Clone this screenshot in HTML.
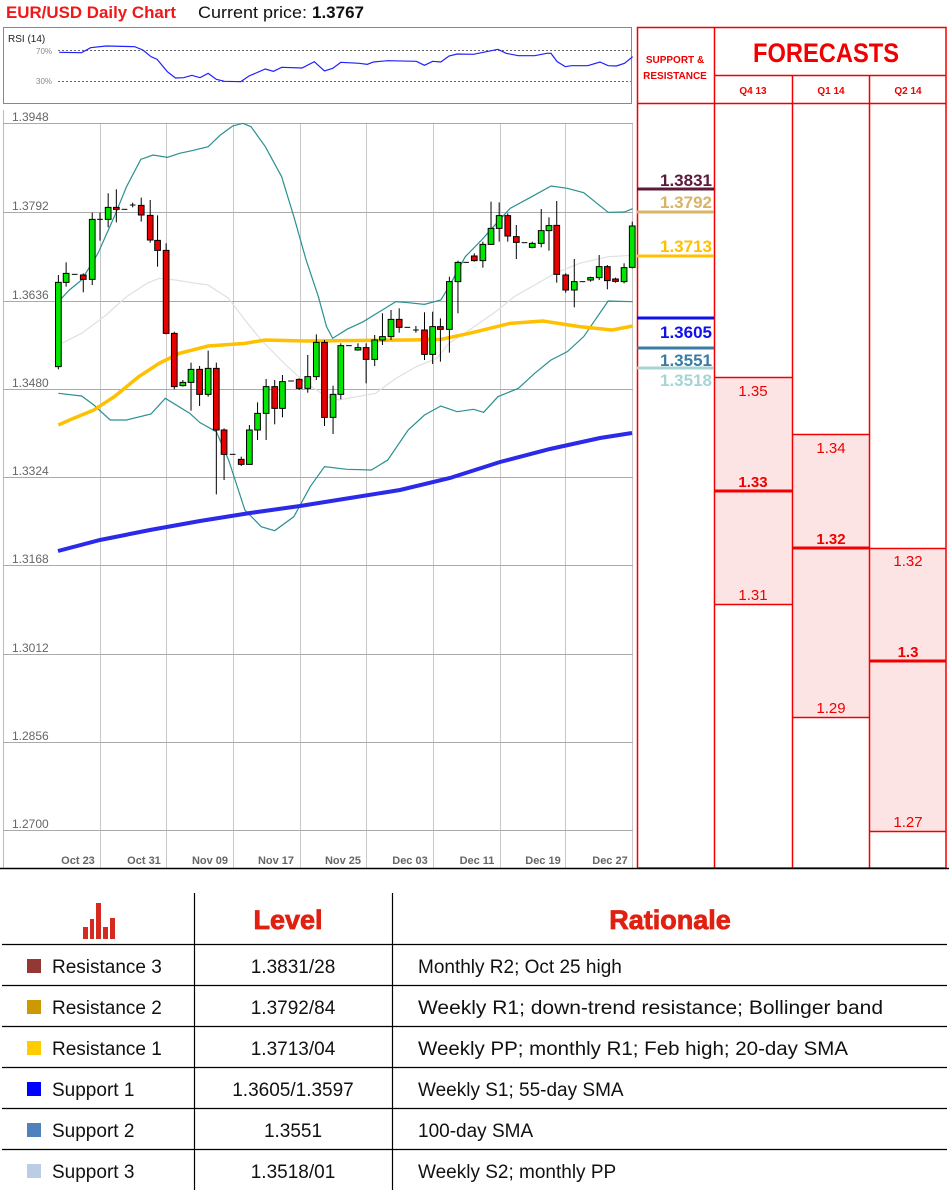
<!DOCTYPE html>
<html><head><meta charset="utf-8">
<style>
html,body{margin:0;padding:0;background:#fff;}
body{width:949px;height:1193px;overflow:hidden;position:relative;font-family:"Liberation Sans",sans-serif;}
svg{position:absolute;left:0;top:0;}
.c line{stroke:#000;stroke-width:1;vector-effect:non-scaling-stroke}
.c rect{stroke:#000;stroke-width:1;vector-effect:non-scaling-stroke}
.g{fill:#00e600}.r{fill:#e80000}
.ns{vector-effect:non-scaling-stroke;fill:none}
</style></head><body>
<svg width="949" height="1193" viewBox="0 0 949 1193" xmlns="http://www.w3.org/2000/svg">
<!-- title -->
<text x="6" y="18" font-size="17" font-weight="bold" fill="#f01818" textLength="170" lengthAdjust="spacingAndGlyphs">EUR/USD Daily Chart</text>
<text x="198" y="18" font-size="17" fill="#111" textLength="109" lengthAdjust="spacingAndGlyphs">Current price:</text>
<text x="312" y="18" font-size="17" font-weight="bold" fill="#111" textLength="52" lengthAdjust="spacingAndGlyphs">1.3767</text>
<!-- RSI -->
<rect x="3.5" y="27.5" width="628" height="76" fill="#fff" stroke="#888"/>
<text x="8" y="42" font-size="10" fill="#222">RSI (14)</text>
<text x="36" y="54" font-size="8" fill="#888">70%</text>
<text x="36" y="84" font-size="8" fill="#888">30%</text>
<line x1="58" y1="50.5" x2="631" y2="50.5" stroke="#666" stroke-dasharray="2,2"/>
<line x1="58" y1="81.5" x2="631" y2="81.5" stroke="#666" stroke-dasharray="2,2"/>
<g transform="scale(0.40816,0.33333)">
<polyline class="ns" stroke="#2020ff" stroke-width="1.2" points="145,157 200,158 222,143 260,138 330,140 350,150 370,170 385,178 410,215 430,234 450,233 470,226 490,233 510,220 530,238 550,244 590,245 610,228 650,207 670,214 690,202 740,204 770,185 795,213 815,205 835,187 880,190 900,193 915,186 950,182 1020,184 1040,196 1060,184 1080,186 1100,168 1120,162 1160,163 1220,148 1240,160 1270,167 1310,167 1340,160 1350,160 1365,185 1385,200 1400,197 1440,197 1470,186 1490,197 1510,198 1530,190 1550,170"/>
</g>
<!-- main chart frame -->
<line x1="3.5" y1="110" x2="3.5" y2="868" stroke="#bbb"/>
<g stroke="#c8c8c8" stroke-width="1">
<line x1="100.5" y1="123" x2="100.5" y2="868"/><line x1="166.5" y1="123" x2="166.5" y2="868"/><line x1="233.5" y1="123" x2="233.5" y2="868"/><line x1="300.5" y1="123" x2="300.5" y2="868"/><line x1="366.5" y1="123" x2="366.5" y2="868"/><line x1="433.5" y1="123" x2="433.5" y2="868"/><line x1="500.5" y1="123" x2="500.5" y2="868"/><line x1="565.5" y1="123" x2="565.5" y2="868"/><line x1="632.5" y1="123" x2="632.5" y2="868"/>
</g>
<g stroke="#aaa" stroke-width="1">
<line x1="3" y1="123.5" x2="633" y2="123.5"/><line x1="3" y1="212.5" x2="633" y2="212.5"/><line x1="3" y1="301.5" x2="633" y2="301.5"/><line x1="3" y1="389.5" x2="633" y2="389.5"/><line x1="3" y1="477.5" x2="633" y2="477.5"/><line x1="3" y1="565.5" x2="633" y2="565.5"/><line x1="3" y1="654.5" x2="633" y2="654.5"/><line x1="3" y1="742.5" x2="633" y2="742.5"/><line x1="3" y1="830.5" x2="633" y2="830.5"/>
</g>
<g font-size="12" fill="#666">
<text x="12" y="121">1.3948</text><text x="12" y="210">1.3792</text><text x="12" y="299">1.3636</text><text x="12" y="387">1.3480</text><text x="12" y="475">1.3324</text><text x="12" y="563">1.3168</text><text x="12" y="652">1.3012</text><text x="12" y="740">1.2856</text><text x="12" y="828">1.2700</text>
</g>
<g font-size="11" fill="#666" font-weight="bold" text-anchor="middle">
<text x="78" y="864">Oct 23</text><text x="144" y="864">Oct 31</text><text x="210" y="864">Nov 09</text><text x="276" y="864">Nov 17</text><text x="343" y="864">Nov 25</text><text x="410" y="864">Dec 03</text><text x="477" y="864">Dec 11</text><text x="543" y="864">Dec 19</text><text x="610" y="864">Dec 27</text>
</g>
<g transform="translate(0,110) scale(0.40816,0.33333)">
<polyline class="ns" stroke="#e0e0e0" stroke-width="1.2" points="143,705 200,670 260,615 310,560 360,520 390,505 430,510 470,518 510,525 560,565 600,630 640,690 700,765 750,820 800,860 830,870 920,850 970,805 1020,770 1070,745 1100,700 1150,660 1220,600 1260,560 1310,525 1360,490 1420,460 1490,440 1550,436"/>
<polyline class="ns" stroke="#2a9090" stroke-width="1.2" points="143,575 170,540 200,510 240,430 280,320 310,230 345,148 375,135 410,142 440,130 470,122 510,110 540,75 570,48 595,40 615,50 650,110 690,200 720,320 750,450 780,560 800,650 815,685 850,658 890,635 930,605 970,575 1000,578 1040,583 1080,570 1100,530 1140,440 1180,390 1220,335 1250,295 1300,262 1350,228 1390,235 1430,248 1490,307 1530,306 1550,296"/>
<polyline class="ns" stroke="#2a9090" stroke-width="1.2" points="143,850 200,858 230,885 270,930 310,930 370,912 405,865 465,910 490,938 530,965 560,1050 600,1200 640,1250 673,1262 720,1220 760,1130 795,1070 850,1078 910,1080 950,1050 1000,960 1040,915 1080,888 1120,905 1160,898 1185,907 1220,860 1270,835 1310,790 1350,750 1390,725 1430,680 1490,573 1550,575"/>
<polyline class="ns" stroke="#ffc000" stroke-width="3.5" points="143,945 180,925 230,900 280,860 340,800 390,760 440,730 510,708 600,700 650,690 750,693 1000,690 1080,688 1150,670 1250,640 1330,633 1420,650 1500,660 1550,648"/>
<g class="c">
<line x1="143" y1="495" x2="143" y2="778"/><rect class="g" x="136" y="517" width="14" height="253"/>
<line x1="162" y1="457" x2="162" y2="530"/><rect class="g" x="155" y="490" width="14" height="27"/>
<line x1="176" y1="493" x2="190" y2="493"/>
<line x1="204" y1="490" x2="204" y2="547"/><rect class="r" x="197" y="495" width="14" height="13"/>
<line x1="226" y1="308" x2="226" y2="525"/><rect class="g" x="219" y="328" width="14" height="180"/>
<line x1="245" y1="308" x2="245" y2="392"/><line x1="238" y1="328" x2="252" y2="328"/>
<line x1="265" y1="250" x2="265" y2="352"/><rect class="g" x="258" y="292" width="14" height="36"/>
<line x1="285" y1="238" x2="285" y2="337"/><rect class="r" x="278" y="292" width="14" height="6"/>
<line x1="298" y1="298" x2="312" y2="298"/>
<line x1="318" y1="285" x2="332" y2="285"/><line x1="325" y1="278" x2="325" y2="292"/>
<line x1="346" y1="263" x2="346" y2="335"/><rect class="r" x="339" y="286" width="14" height="29"/>
<line x1="368" y1="270" x2="368" y2="398"/><rect class="r" x="361" y="316" width="14" height="74"/>
<line x1="386" y1="316" x2="386" y2="470"/><rect class="r" x="379" y="391" width="14" height="30"/>
<line x1="407" y1="400" x2="407" y2="673"/><rect class="r" x="400" y="421" width="14" height="249"/>
<line x1="427" y1="665" x2="427" y2="838"/><rect class="r" x="420" y="670" width="14" height="160"/>
<line x1="448" y1="810" x2="448" y2="830"/><rect class="g" x="441" y="817" width="14" height="10"/>
<line x1="468" y1="758" x2="468" y2="902"/><rect class="g" x="461" y="778" width="14" height="39"/>
<line x1="489" y1="768" x2="489" y2="888"/><rect class="r" x="482" y="778" width="14" height="75"/>
<line x1="510" y1="722" x2="510" y2="860"/><rect class="g" x="503" y="775" width="14" height="78"/>
<line x1="530" y1="758" x2="530" y2="1153"/><rect class="r" x="523" y="775" width="14" height="185"/>
<line x1="549" y1="955" x2="549" y2="1110"/><rect class="r" x="542" y="960" width="14" height="73"/>
<line x1="563" y1="1033" x2="577" y2="1033"/>
<line x1="591" y1="1040" x2="591" y2="1068"/><rect class="r" x="584" y="1048" width="14" height="15"/>
<line x1="611" y1="945" x2="611" y2="1063"/><rect class="g" x="604" y="960" width="14" height="103"/>
<line x1="631" y1="877" x2="631" y2="990"/><rect class="g" x="624" y="910" width="14" height="50"/>
<line x1="652" y1="807" x2="652" y2="990"/><rect class="g" x="645" y="830" width="14" height="80"/>
<line x1="673" y1="810" x2="673" y2="943"/><rect class="r" x="666" y="830" width="14" height="65"/>
<line x1="692" y1="795" x2="692" y2="922"/><rect class="g" x="685" y="815" width="14" height="80"/>
<line x1="706" y1="813" x2="720" y2="813"/>
<line x1="733" y1="805" x2="733" y2="840"/><rect class="r" x="726" y="808" width="14" height="27"/>
<line x1="754" y1="735" x2="754" y2="848"/><rect class="g" x="747" y="800" width="14" height="35"/>
<line x1="775" y1="673" x2="775" y2="810"/><rect class="g" x="768" y="697" width="14" height="103"/>
<line x1="795" y1="690" x2="795" y2="948"/><rect class="r" x="788" y="697" width="14" height="225"/>
<line x1="816" y1="827" x2="816" y2="972"/><rect class="g" x="809" y="853" width="14" height="69"/>
<line x1="835" y1="700" x2="835" y2="868"/><rect class="g" x="828" y="707" width="14" height="146"/>
<line x1="848" y1="707" x2="862" y2="707"/>
<line x1="877" y1="700" x2="877" y2="722"/><rect class="g" x="870" y="713" width="14" height="7"/>
<line x1="897" y1="700" x2="897" y2="820"/><rect class="r" x="890" y="713" width="14" height="35"/>
<line x1="918" y1="675" x2="918" y2="768"/><rect class="g" x="911" y="690" width="14" height="58"/>
<line x1="937" y1="610" x2="937" y2="705"/><rect class="g" x="930" y="680" width="14" height="10"/>
<line x1="958" y1="600" x2="958" y2="690"/><rect class="g" x="951" y="628" width="14" height="52"/>
<line x1="978" y1="595" x2="978" y2="668"/><rect class="r" x="971" y="628" width="14" height="24"/>
<line x1="991" y1="652" x2="1005" y2="652"/>
<line x1="1012" y1="660" x2="1026" y2="660"/><line x1="1019" y1="648" x2="1019" y2="668"/>
<line x1="1040" y1="607" x2="1040" y2="750"/><rect class="r" x="1033" y="660" width="14" height="73"/>
<line x1="1060" y1="605" x2="1060" y2="762"/><rect class="g" x="1053" y="650" width="14" height="83"/>
<line x1="1079" y1="625" x2="1079" y2="755"/><rect class="r" x="1072" y="650" width="14" height="8"/>
<line x1="1101" y1="500" x2="1101" y2="728"/><rect class="g" x="1094" y="515" width="14" height="143"/>
<line x1="1122" y1="452" x2="1122" y2="610"/><rect class="g" x="1115" y="457" width="14" height="58"/>
<line x1="1135" y1="457" x2="1149" y2="457"/>
<line x1="1162" y1="430" x2="1162" y2="455"/><rect class="r" x="1155" y="438" width="14" height="14"/>
<line x1="1183" y1="395" x2="1183" y2="473"/><rect class="g" x="1176" y="403" width="14" height="49"/>
<line x1="1203" y1="275" x2="1203" y2="405"/><rect class="g" x="1196" y="355" width="14" height="48"/>
<line x1="1223" y1="277" x2="1223" y2="395"/><rect class="g" x="1216" y="317" width="14" height="38"/>
<line x1="1244" y1="310" x2="1244" y2="395"/><rect class="r" x="1237" y="317" width="14" height="61"/>
<line x1="1265" y1="345" x2="1265" y2="447"/><rect class="r" x="1258" y="380" width="14" height="17"/>
<line x1="1278" y1="398" x2="1292" y2="398"/>
<line x1="1304" y1="395" x2="1304" y2="415"/><rect class="g" x="1297" y="400" width="14" height="12"/>
<line x1="1326" y1="297" x2="1326" y2="412"/><rect class="g" x="1319" y="362" width="14" height="38"/>
<line x1="1345" y1="322" x2="1345" y2="422"/><rect class="g" x="1338" y="347" width="14" height="15"/>
<line x1="1364" y1="273" x2="1364" y2="518"/><rect class="r" x="1357" y="346" width="14" height="147"/>
<line x1="1386" y1="490" x2="1386" y2="548"/><rect class="r" x="1379" y="495" width="14" height="45"/>
<line x1="1407" y1="447" x2="1407" y2="592"/><rect class="g" x="1400" y="515" width="14" height="25"/>
<line x1="1420" y1="515" x2="1434" y2="515"/>
<line x1="1447" y1="500" x2="1447" y2="515"/><rect class="g" x="1440" y="503" width="14" height="7"/>
<line x1="1468" y1="435" x2="1468" y2="510"/><rect class="g" x="1461" y="470" width="14" height="33"/>
<line x1="1488" y1="465" x2="1488" y2="538"/><rect class="r" x="1481" y="470" width="14" height="42"/>
<line x1="1508" y1="503" x2="1508" y2="518"/><rect class="r" x="1501" y="507" width="14" height="7"/>
<line x1="1529" y1="460" x2="1529" y2="520"/><rect class="g" x="1522" y="473" width="14" height="42"/>
<line x1="1549" y1="335" x2="1549" y2="475"/><rect class="g" x="1542" y="348" width="14" height="124"/>
</g>
</g>
<polyline fill="none" stroke="#2a2ae8" stroke-width="4" points="58,551 100,540 150,530 200,521 250,513 300,506 350,498 400,490 450,478 500,462 550,449 600,438 632,433"/>
<!-- right panel -->
<g fill="#fde4e4">
<rect x="714" y="377" width="78" height="227"/>
<rect x="792" y="434" width="77" height="283"/>
<rect x="869" y="548" width="77" height="283"/>
</g>
<g stroke="#f00000" stroke-width="1.5" fill="none">
<rect x="637.5" y="27.5" width="308.5" height="840.5"/>
<line x1="714.5" y1="27" x2="714.5" y2="868"/>
<line x1="792.5" y1="75" x2="792.5" y2="868"/>
<line x1="869.5" y1="75" x2="869.5" y2="868"/>
<line x1="714" y1="75.5" x2="946" y2="75.5"/>
<line x1="637" y1="103.5" x2="946" y2="103.5"/>
<line x1="714" y1="377.5" x2="792" y2="377.5"/><line x1="714" y1="604.5" x2="792" y2="604.5"/>
<line x1="792" y1="434.5" x2="869" y2="434.5"/><line x1="792" y1="717.5" x2="869" y2="717.5"/>
<line x1="869" y1="548.5" x2="946" y2="548.5"/><line x1="869" y1="831.5" x2="946" y2="831.5"/>
</g>
<g stroke="#f00000" stroke-width="3">
<line x1="714" y1="491" x2="792" y2="491"/>
<line x1="792" y1="548" x2="869" y2="548"/>
<line x1="869" y1="661" x2="946" y2="661"/>
</g>
<g fill="#f00000" font-weight="bold" text-anchor="middle">
<text x="675" y="63" font-size="10">SUPPORT &amp;</text>
<text x="675" y="79" font-size="10">RESISTANCE</text>
<text x="826" y="62" font-size="27" textLength="146" lengthAdjust="spacingAndGlyphs">FORECASTS</text>
<text x="753" y="94" font-size="10">Q4 13</text><text x="831" y="94" font-size="10">Q1 14</text><text x="908" y="94" font-size="10">Q2 14</text>
<text x="753" y="487" font-size="15">1.33</text><text x="831" y="544" font-size="15">1.32</text><text x="908" y="657" font-size="15">1.3</text>
</g>
<g fill="#f00000" font-size="15" text-anchor="middle">
<text x="753" y="396">1.35</text><text x="753" y="600">1.31</text>
<text x="831" y="453">1.34</text><text x="831" y="713">1.29</text>
<text x="908" y="566">1.32</text><text x="908" y="827">1.27</text>
</g>
<g stroke-width="3">
<line x1="637" y1="189" x2="714" y2="189" stroke="#5c1a3a"/>
<line x1="637" y1="212" x2="714" y2="212" stroke="#d8b468"/>
<line x1="637" y1="256" x2="714" y2="256" stroke="#ffc000"/>
<line x1="637" y1="318" x2="714" y2="318" stroke="#1010ee"/>
<line x1="637" y1="348" x2="714" y2="348" stroke="#3a7ca4"/>
<line x1="637" y1="368" x2="714" y2="368" stroke="#a8d4d4"/>
</g>
<g font-size="17" font-weight="bold" text-anchor="end">
<text x="712" y="186" fill="#5c1a3a">1.3831</text>
<text x="712" y="208" fill="#d8b468">1.3792</text>
<text x="712" y="252" fill="#ffc000">1.3713</text>
<text x="712" y="338" fill="#1010ee">1.3605</text>
<text x="712" y="366" fill="#3a7ca4">1.3551</text>
<text x="712" y="386" fill="#a8d4d4">1.3518</text>
</g>
<line x1="0" y1="868.5" x2="949" y2="868.5" stroke="#000" stroke-width="1.5"/>
<!-- table -->
<g fill="#d42a20">
<rect x="83" y="927" width="5" height="12"/><rect x="90" y="919" width="4" height="20"/><rect x="96" y="903" width="5" height="36"/><rect x="103" y="927" width="5" height="12"/><rect x="110" y="918" width="5" height="21"/>
</g>
<g fill="#e02010" font-weight="900" font-size="27" text-anchor="middle" stroke="#e02010" stroke-width="0.8">
<text x="288" y="929">Level</text>
<text x="670" y="929">Rationale</text>
</g>
<g stroke="#000" stroke-width="1.2">
<line x1="194.5" y1="893" x2="194.5" y2="1190"/>
<line x1="392.5" y1="893" x2="392.5" y2="1190"/>
<line x1="2" y1="944.5" x2="947" y2="944.5"/>
<line x1="2" y1="985.5" x2="947" y2="985.5"/>
<line x1="2" y1="1026.5" x2="947" y2="1026.5"/>
<line x1="2" y1="1067.5" x2="947" y2="1067.5"/>
<line x1="2" y1="1108.5" x2="947" y2="1108.5"/>
<line x1="2" y1="1149.5" x2="947" y2="1149.5"/>
</g>
<rect x="27" y="959" width="14" height="14" fill="#953735"/>
<rect x="27" y="1000" width="14" height="14" fill="#cc9900"/>
<rect x="27" y="1041" width="14" height="14" fill="#ffcc00"/>
<rect x="27" y="1082" width="14" height="14" fill="#0000ff"/>
<rect x="27" y="1123" width="14" height="14" fill="#4f81bd"/>
<rect x="27" y="1164" width="14" height="14" fill="#b9cde5"/>
<g font-size="19" fill="#111">
<text x="52" y="973">Resistance 3</text><text x="52" y="1014">Resistance 2</text><text x="52" y="1055">Resistance 1</text><text x="52" y="1096">Support 1</text><text x="52" y="1137">Support 2</text><text x="52" y="1178">Support 3</text>
</g>
<g font-size="19" fill="#111" text-anchor="middle">
<text x="293" y="973">1.3831/28</text><text x="293" y="1014">1.3792/84</text><text x="293" y="1055">1.3713/04</text><text x="293" y="1096">1.3605/1.3597</text><text x="293" y="1137">1.3551</text><text x="293" y="1178">1.3518/01</text>
</g>
<g font-size="19" fill="#111">
<text x="418" y="973">Monthly R2; Oct 25 high</text>
<text x="418" y="1014" textLength="465" lengthAdjust="spacingAndGlyphs">Weekly R1; down-trend resistance; Bollinger band</text>
<text x="418" y="1055" textLength="430" lengthAdjust="spacingAndGlyphs">Weekly PP; monthly R1; Feb high; 20-day SMA</text>
<text x="418" y="1096">Weekly S1; 55-day SMA</text>
<text x="418" y="1137">100-day SMA</text>
<text x="418" y="1178">Weekly S2; monthly PP</text>
</g>
</svg>
</body></html>
